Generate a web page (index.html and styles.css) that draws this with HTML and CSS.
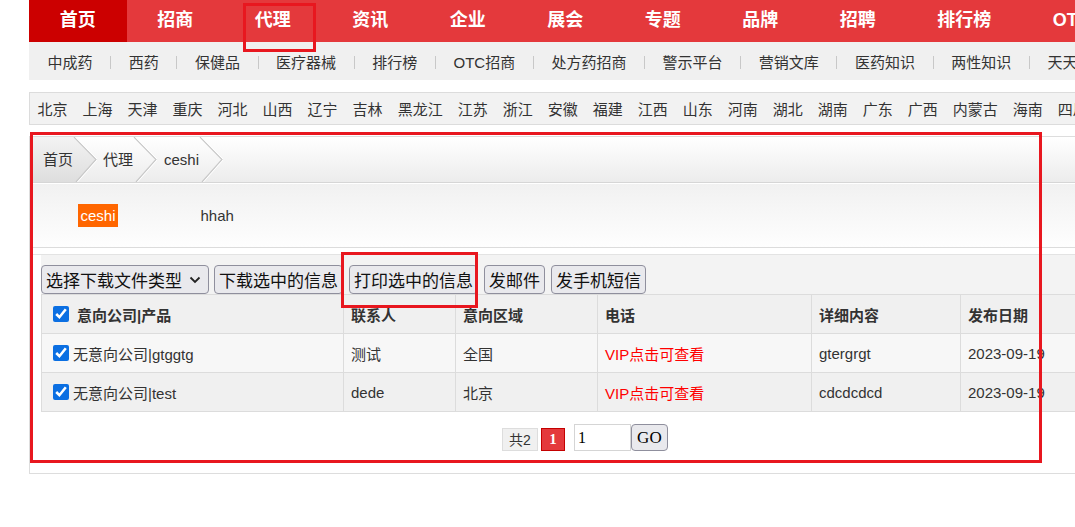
FILE: index.html
```html
<!DOCTYPE html>
<html lang="zh-CN">
<head>
<meta charset="utf-8">
<title>代理 - ceshi</title>
<link rel="stylesheet" href="styles.css">
</head>
<body>
<div class="page">
  <nav class="topnav">
    <a class="active" href="#">首页</a>
    <a href="#">招商</a>
    <a href="#">代理</a>
    <a href="#">资讯</a>
    <a href="#">企业</a>
    <a href="#">展会</a>
    <a href="#">专题</a>
    <a href="#">品牌</a>
    <a href="#">招聘</a>
    <a href="#">排行榜</a>
    <a href="#">OTC</a>
  </nav>

  <div class="subnav">
    <a href="#">中成药</a><i class="sep"></i>
    <a href="#">西药</a><i class="sep"></i>
    <a href="#">保健品</a><i class="sep"></i>
    <a href="#">医疗器械</a><i class="sep"></i>
    <a href="#">排行榜</a><i class="sep"></i>
    <a href="#">OTC招商</a><i class="sep"></i>
    <a href="#">处方药招商</a><i class="sep"></i>
    <a href="#">警示平台</a><i class="sep"></i>
    <a href="#">营销文库</a><i class="sep"></i>
    <a href="#">医药知识</a><i class="sep"></i>
    <a href="#">两性知识</a><i class="sep"></i>
    <a href="#">天天健康</a>
  </div>

  <div class="cities">
    <a href="#">北京</a><a href="#">上海</a><a href="#">天津</a><a href="#">重庆</a><a href="#">河北</a><a href="#">山西</a><a href="#">辽宁</a><a href="#">吉林</a><a href="#">黑龙江</a><a href="#">江苏</a><a href="#">浙江</a><a href="#">安徽</a><a href="#">福建</a><a href="#">江西</a><a href="#">山东</a><a href="#">河南</a><a href="#">湖北</a><a href="#">湖南</a><a href="#">广东</a><a href="#">广西</a><a href="#">内蒙古</a><a href="#">海南</a><a href="#">四川</a><a href="#">贵州</a>
  </div>

  <div class="main">
    <div class="crumbs">
      <a class="crumb first" href="#"><span>首页</span><svg class="arrow" width="24" height="45" viewBox="0 0 24 45"><defs><linearGradient id="cg" x1="0" y1="0" x2="0" y2="1"><stop offset="0" stop-color="#f3f3f3"/><stop offset="1" stop-color="#dedede"/></linearGradient></defs><polygon points="0,0 1,0 23,22.5 3,45 0,45" fill="url(#cg)"/><polyline points="1,0 23,22.5 3,45" fill="none" stroke="#c9c9c9" stroke-width="1.2"/><polyline points="2.5,0 24.5,22.5 4.5,45" fill="none" stroke="#ffffff" stroke-width="1"/></svg></a>
      <a class="crumb" href="#"><span>代理</span><svg class="arrow" width="24" height="45" viewBox="0 0 24 45"><polyline points="1,0 23,22.5 3,45" fill="none" stroke="#c9c9c9" stroke-width="1.2"/><polyline points="2.5,0 24.5,22.5 4.5,45" fill="none" stroke="#ffffff" stroke-width="1"/></svg></a>
      <a class="crumb" href="#"><span>ceshi</span><svg class="arrow" width="24" height="45" viewBox="0 0 24 45"><polyline points="1,0 23,22.5 3,45" fill="none" stroke="#c9c9c9" stroke-width="1.2"/><polyline points="2.5,0 24.5,22.5 4.5,45" fill="none" stroke="#ffffff" stroke-width="1"/></svg></a>
    </div>

    <div class="tabs">
      <a class="tab on" href="#">ceshi</a>
      <a class="tab" href="#">hhah</a>
    </div>

    <div class="list">
      <div class="tools">
        <span class="selectwrap">
          <select class="ctl select">
            <option>选择下载文件类型</option>
            <option>Excel</option>
            <option>Word</option>
          </select>
          <svg class="chev" width="12" height="8" viewBox="0 0 12 8"><polyline points="1.5,1.5 6,6 10.5,1.5" fill="none" stroke="#222" stroke-width="1.8"/></svg>
        </span>
        <button class="ctl">下载选中的信息</button>
        <button class="ctl">打印选中的信息</button>
        <button class="ctl">发邮件</button>
        <button class="ctl">发手机短信</button>
      </div>

      <table class="grid">
        <colgroup>
          <col class="c1"><col class="c2"><col class="c3"><col class="c4"><col class="c5"><col class="c6">
        </colgroup>
        <thead>
          <tr>
            <th class="first"><label class="chk head"><input type="checkbox" checked><span>意向公司|产品</span></label></th>
            <th>联系人</th>
            <th>意向区域</th>
            <th>电话</th>
            <th>详细内容</th>
            <th>发布日期</th>
          </tr>
        </thead>
        <tbody>
          <tr class="odd">
            <td class="first"><label class="chk"><input type="checkbox" checked><span>无意向公司|gtggtg</span></label></td>
            <td>测试</td>
            <td>全国</td>
            <td class="vip">VIP点击可查看</td>
            <td>gtergrgt</td>
            <td>2023-09-19</td>
          </tr>
          <tr class="even">
            <td class="first"><label class="chk"><input type="checkbox" checked><span>无意向公司|test</span></label></td>
            <td>dede</td>
            <td>北京</td>
            <td class="vip">VIP点击可查看</td>
            <td>cdcdcdcd</td>
            <td>2023-09-19</td>
          </tr>
        </tbody>
      </table>

      <div class="pager">
        <span class="total">共2</span>
        <span class="cur">1</span>
        <input class="goin" type="text" value="1">
        <button class="gobtn">GO</button>
      </div>
    </div>
  </div>
</div>

<div class="mark mark-nav"></div>
<div class="mark mark-main"></div>
<div class="mark mark-print"></div>
</body>
</html>
```

FILE: styles.css
```css
html, body {
  margin: 0;
  padding: 0;
  overflow: hidden;
  background: #fff;
}
body {
  font-family: "Liberation Sans", "Noto Sans CJK SC", sans-serif;
  color: #333;
  width: 1075px;
  height: 527px;
}
a { text-decoration: none; color: inherit; }

.page {
  margin-left: 29px;
  width: 1240px;
}

/* top nav */
.topnav {
  display: flex;
  height: 42px;
  background: #e4393c;
}
.topnav a {
  color: #fff;
  font-weight: bold;
  font-size: 18px;
  line-height: 40px;
  padding: 0 30.75px;
  white-space: nowrap;
}
.topnav a.active { background: #cc0000; }

/* sub nav */
.subnav {
  display: flex;
  align-items: center;
  height: 38px;
  background: #f0f0f0;
  padding-left: 18.5px;
  font-size: 15px;
  color: #333;
  white-space: nowrap;
}
.subnav .sep {
  display: block;
  width: 1px;
  height: 13px;
  background: #c8c8c8;
  margin: 2px 17.6px 0;
}

/* cities */
.cities {
  margin-top: 12px;
  height: 31px;
  border: 1px solid #dcdcdc;
  background: #f2f2f2;
  display: flex;
  align-items: center;
  font-size: 15px;
  white-space: nowrap;
}
.cities a { padding: 0 7.5px; color: #333; }

/* main box */
.main {
  margin-top: 11px;
  width: 1112px;
  box-sizing: border-box;
  border: 1px solid #dddddd;
  padding-bottom: 22px;
}

.crumbs {
  display: flex;
  height: 45px;
  background: linear-gradient(#ffffff, #ececec);
  border-bottom: 1px solid #d6d6d6;
}
.crumb {
  display: flex;
  align-items: center;
  font-size: 15px;
  color: #333;
  padding-left: 6px;
}
.crumb span { line-height: 45px; }
.crumb.first {
  padding-left: 13px;
  background: linear-gradient(#f3f3f3, #dedede);
  background-size: calc(100% - 24px) 100%;
  background-repeat: no-repeat;
}
.crumb:nth-child(3) { padding-left: 7px; }
.arrow { display: block; flex: none; }

.tabs {
  height: 63px;
  border-top: 1px solid #ffffff;
  border-bottom: 1px solid #dcdcdc;
  background: linear-gradient(#f1f1f1, #fefefe);
  display: flex;
  align-items: center;
  padding-left: 48px;
}
.tab {
  font-size: 15px;
  line-height: 23px;
  height: 23px;
  padding: 0 2.5px;
  color: #333;
}
.tab.on {
  background: #ff6600;
  color: #fff;
  margin-right: 80px;
}

.list {
  margin-top: 6px;
  border-top: 1px solid #e3e3e3;
  padding: 0 11px;
}
.tools {
  display: flex;
  gap: 6px;
  padding-top: 10px;
  background: #f3f3f3;
}
.ctl {
  font-family: "Noto Sans CJK SC", "Liberation Sans", sans-serif;
  font-size: 17px;
  height: 29px;
  line-height: 27px;
  padding: 0 4px;
  color: #111;
  background: #e9e9ed;
  border: 1px solid #8f8f9d;
  border-radius: 4px;
  box-sizing: border-box;
  margin: 0;
}
.selectwrap { position: relative; display: block; margin-right: -1px; }
.select {
  appearance: none;
  -webkit-appearance: none;
  width: 168px;
  padding-right: 26px;
}
.chev {
  position: absolute;
  right: 8px;
  top: 11px;
  pointer-events: none;
}

.grid {
  width: 1088px;
  table-layout: fixed;
  border-collapse: collapse;
  font-size: 15px;
  color: #333;
}
.grid col.c1 { width: 302px; }
.grid col.c2 { width: 112px; }
.grid col.c3 { width: 142px; }
.grid col.c4 { width: 214px; }
.grid col.c5 { width: 149px; }
.grid col.c6 { width: 169px; }
.grid th, .grid td {
  border: 1px solid #dcdcdc;
  height: 38px;
  padding: 0 0 0 7px;
  text-align: left;
  white-space: nowrap;
  overflow: visible;
}
.grid th { background: #f0f0f0; font-weight: bold; }
.grid tr.odd td { background: #f7f7f7; }
.grid tr.even td { background: #f0f0f0; }
.grid .first { padding-left: 11px; }
.grid .vip { color: #ff0000; }
.chk { display: flex; align-items: center; }
.chk input {
  width: 16px;
  height: 16px;
  margin: 0 4px 0 0;
  accent-color: #0b6fe2;
}
.chk.head input { margin-right: 8px; }

.pager {
  display: flex;
  justify-content: center;
  align-items: flex-end;
  margin-top: 12px;
}
.total {
  height: 23px;
  line-height: 23px;
  box-sizing: border-box;
  border: 1px solid #dddddd;
  background: #f0f0f0;
  padding: 0 6px;
  font-size: 14px;
  color: #333;
}
.cur {
  margin-left: 3px;
  width: 24px;
  height: 23px;
  box-sizing: border-box;
  line-height: 21px;
  text-align: center;
  background: #e4393c;
  border: 1px solid #c40000;
  color: #fff;
  font-family: "Liberation Serif", serif;
  font-size: 15px;
  font-weight: bold;
}
.goin {
  margin: 0 0 0 9px;
  width: 57px;
  height: 27px;
  box-sizing: border-box;
  border: 1px solid #d5d5d5;
  padding: 0 3px;
  font-family: "Liberation Serif", serif;
  font-size: 16px;
  color: #000;
  outline: none;
}
.gobtn {
  margin: 0;
  width: 37px;
  height: 27px;
  box-sizing: border-box;
  padding: 0;
  background: #e9e9ed;
  border: 1px solid #8f8f9d;
  border-radius: 4px;
  font-family: "Liberation Serif", serif;
  font-size: 17px;
  color: #000;
}

/* red annotation frames */
.mark {
  position: absolute;
  border: 3px solid #e8171f;
  box-sizing: border-box;
  pointer-events: none;
}
.mark-nav { left: 243px; top: 3px; width: 73px; height: 49px; }
.mark-main { left: 30px; top: 132px; width: 1012px; height: 331px; }
.mark-print { left: 341px; top: 252px; width: 137px; height: 56px; }
```
